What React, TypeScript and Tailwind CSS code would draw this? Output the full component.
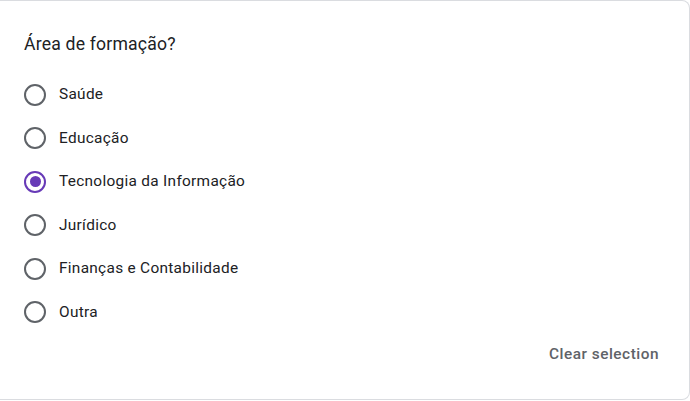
const OPTIONS = [
  'Saúde',
  'Educação',
  'Tecnologia da Informação',
  'Jurídico',
  'Finanças e Contabilidade',
  'Outra',
];

const SELECTED = 'Tecnologia da Informação';

const Radio = ({ checked }: { checked: boolean }) => (
  <span
    className={
      checked
        ? 'flex h-[22px] w-[22px] shrink-0 items-center justify-center rounded-full border-2 border-[#673ab7]'
        : 'flex h-[22px] w-[22px] shrink-0 items-center justify-center rounded-full border-2 border-[#5f6368]'
    }
  >
    {checked && <span className="h-[11px] w-[11px] rounded-full bg-[#673ab7]" />}
  </span>
);

export default function App() {
  return (
    <div className="h-[401px] w-[690px] bg-white font-['Roboto',sans-serif]">
      {/* Question card */}
      <div className="flex h-[400px] w-[690px] flex-col rounded-r-lg border-y border-r border-[#dadce0] bg-white pl-6 pr-[30px] pt-[31px]">
        <h2 className="text-[17.6px] leading-6 tracking-[0.2px] text-[#202124]">Área de formação?</h2>

        <div className="mt-[17px] flex flex-col">
          {OPTIONS.map((opt) => (
            <label key={opt} className="flex h-[43.5px] items-center gap-[13px]">
              <Radio checked={opt === SELECTED} />
              <span className="text-[15.4px] tracking-[0.3px] text-[#202124]">{opt}</span>
            </label>
          ))}
        </div>

        <div className="mt-[9px] flex justify-end">
          <button className="text-[15.4px] font-medium tracking-[0.5px] text-[#5f6368]">Clear selection</button>
        </div>
      </div>
    </div>
  );
}
